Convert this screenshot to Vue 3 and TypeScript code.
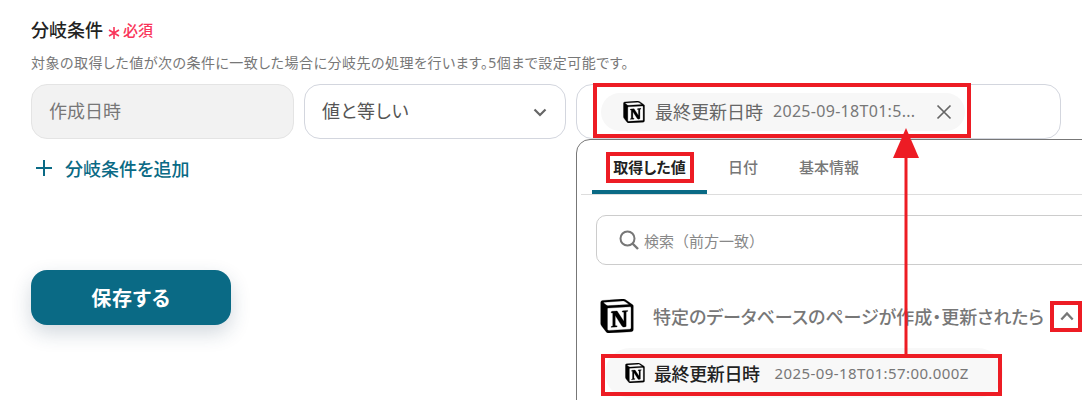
<script setup lang="ts">
const notionPath =
  'M4.459 4.208c.746.606 1.026.56 2.428.466l13.215-.793c.28 0 .047-.28-.046-.326L17.86 1.968c-.42-.326-.981-.7-2.055-.607L3.01 2.295c-.466.046-.56.28-.374.466zm.793 3.08v13.904c0 .747.373 1.027 1.214.98l14.523-.84c.841-.046.935-.56.935-1.167V6.354c0-.606-.233-.933-.748-.887l-15.177.887c-.56.047-.747.327-.747.933zm14.337.745c.093.42 0 .84-.42.888l-.7.14v10.264c-.608.327-1.168.514-1.635.514-.748 0-.935-.234-1.495-.933l-4.577-7.186v6.952L12.21 19s0 .84-1.168.84l-3.222.186c-.093-.186 0-.653.327-.746l.84-.233V9.854L7.822 9.76c-.094-.42.14-1.026.793-1.073l3.456-.233 4.764 7.279v-6.44l-1.215-.139c-.093-.514.28-.887.747-.933zM1.936 1.035l13.31-.98c1.634-.14 2.055-.047 3.082.7l4.249 2.986c.7.513.934.653.934 1.213v16.378c0 1.026-.373 1.634-1.68 1.726l-15.458.934c-.98.047-1.448-.093-1.962-.747l-3.129-4.06c-.56-.747-.793-1.306-.793-1.96V2.667c0-.839.374-1.54 1.447-1.632z'

const tabs = ['取得した値', '日付', '基本情報']
</script>

<template>
  <div class="page">
    <div class="title-row">
      <span class="title">分岐条件</span>
      <svg class="asterisk" width="12" height="12" viewBox="0 0 12 12" fill="none">
        <path d="M6 0v12M1 3l10 6M11 3 1 9" stroke="#f9355a" stroke-width="1.6" />
      </svg>
      <span class="required">必須</span>
    </div>
    <p class="desc">対象の取得した値が次の条件に一致した場合に分岐先の処理を行います。5個まで設定可能です。</p>

    <div class="fields">
      <div class="field disabled"><span class="label">作成日時</span></div>
      <div class="field select">
        <span class="label wide">値と等しい</span>
        <svg width="16" height="16" viewBox="0 0 16 16" fill="none">
          <path d="M2.5 5.5 8 11l5.5-5.5" stroke="#666" stroke-width="2.2" />
        </svg>
      </div>
      <div class="field value">
        <div class="chip">
          <svg class="logo" width="22" height="22" viewBox="0 0 24 24">
            <path d="M2 2 18 1l5 4v18L6 24l-5-5z" fill="#fff" />
            <path :d="notionPath" fill="#000" stroke="#000" stroke-width=".3" />
          </svg>
          <span class="chip-name">最終更新日時</span>
          <span class="chip-date">2025-09-18T01:5...</span>
          <svg class="close" width="16" height="16" viewBox="0 0 16 16" fill="none">
            <path d="M1.5 1.5l13 13M14.5 1.5l-13 13" stroke="#666" stroke-width="1.7" />
          </svg>
        </div>

        <div class="popup">
          <div class="tabs">
            <div v-for="(tab, i) in tabs" :key="tab" class="tab" :class="{ active: i === 0 }">{{ tab }}</div>
          </div>
          <div class="search">
            <svg width="22" height="22" viewBox="0 0 22 22" fill="none">
              <circle cx="9.5" cy="9.5" r="7" stroke="#777" stroke-width="2" />
              <path d="M14.5 14.5 20 20" stroke="#777" stroke-width="2.4" />
            </svg>
            <span>検索（前方一致）</span>
          </div>
          <div class="group">
            <svg width="34" height="34" viewBox="0 0 24 24">
              <path d="M2 2 18 1l5 4v18L6 24l-5-5z" fill="#fff" />
              <path :d="notionPath" fill="#000" stroke="#000" stroke-width=".2" />
            </svg>
            <span class="group-name">特定のデータベースのページが作成・更新されたら</span>
            <svg class="chevron" width="14" height="14" viewBox="0 0 16 16" fill="none">
              <path d="M1.5 12 8 5l6.5 7" stroke="#777" stroke-width="2.6" />
            </svg>
          </div>
          <div class="item">
            <svg width="20" height="20" viewBox="0 0 24 24">
              <path d="M2 2 18 1l5 4v18L6 24l-5-5z" fill="#fff" />
              <path :d="notionPath" fill="#000" stroke="#000" stroke-width=".3" />
            </svg>
            <span class="item-name">最終更新日時</span>
            <span class="item-date">2025-09-18T01:57:00.000Z</span>
          </div>
        </div>
      </div>
    </div>

    <div class="add">
      <svg width="16" height="16" viewBox="0 0 16 16" fill="none">
        <path d="M8 0v16M0 8h16" stroke="#0a6a85" stroke-width="2" />
      </svg>
      <span>分岐条件を追加</span>
    </div>

    <button class="save" type="button">保存する</button>

    <!-- red annotations drawn over the capture -->
    <div class="mark mark-chip"></div>
    <div class="mark mark-tab"></div>
    <div class="mark mark-chevron"></div>
    <div class="mark mark-item"></div>
    <svg class="arrow" width="30" height="230" viewBox="0 0 30 230">
      <path d="M15 28V227" stroke="#ed1c24" stroke-width="3" />
      <path d="M15 0 28 30H2z" fill="#ed1c24" />
    </svg>
  </div>
</template>

<style>
html,
body {
  margin: 0;
  background: #fff;
}
</style>

<style scoped>
.page {
  position: relative;
  width: 1082px;
  height: 400px;
  overflow: hidden;
  box-sizing: border-box;
  padding: 17px 21px 0 31px;
  font-family: "Noto Sans", "Noto Sans CJK JP", sans-serif;
  font-feature-settings: "palt";
  color: #222;
}
.title-row {
  display: flex;
  align-items: center;
  height: 24px;
}
.title {
  font-size: 18px;
  font-weight: 500;
}
.asterisk {
  margin: 8px 0 0 5px;
}
.required {
  margin-left: 3px;
  padding-top: 1px;
  color: #f9355a;
  font-size: 15px;
  font-weight: 500;
}
.desc {
  margin: 10px 0 0;
  font-size: 14px;
  line-height: 24px;
  letter-spacing: 0.5px;
  color: #777;
}
.fields {
  display: flex;
  gap: 10px;
  margin-top: 9px;
}
.field {
  box-sizing: border-box;
  height: 55px;
  border: 1px solid #d3d6de;
  border-radius: 16px;
  display: flex;
  align-items: center;
  padding: 0 17px;
  font-size: 18px;
  color: #555;
}
.label {
  padding-bottom: 3px;
}
.wide {
  letter-spacing: 0.6px;
}
.disabled {
  width: 263px;
  background: #f2f2f2;
  border-color: #e4e4e4;
  color: #777;
}
.select {
  width: 262px;
  justify-content: space-between;
}
.value {
  position: relative;
  width: 485px;
  padding: 0 0 0 24px;
}
.chip {
  box-sizing: border-box;
  width: 364px;
  height: 38px;
  border-radius: 19px;
  background: #f7f7f7;
  display: flex;
  align-items: center;
  padding-left: 22px;
}
.chip-name {
  margin-left: 10px;
  padding-bottom: 2px;
  font-size: 18px;
  color: #666;
}
.chip-date {
  margin-left: 10px;
  padding-bottom: 1px;
  font-size: 16px;
  letter-spacing: 0.3px;
  color: #777;
  white-space: nowrap;
}
.close {
  margin-left: auto;
  margin-right: 13px;
}
.popup {
  position: absolute;
  left: -1px;
  top: 54px;
  width: 560px;
  height: 300px;
  background: #fff;
  border: 1px solid #777;
  border-radius: 14px;
  padding: 0 4px;
}
.tabs {
  display: flex;
  height: 54px;
  border-bottom: 1px solid #ddd;
}
.tab {
  box-sizing: border-box;
  height: 54px;
  padding-top: 15px;
  font-size: 15px;
  line-height: 24px;
  font-weight: 500;
  color: #777;
  margin-left: 41px;
}
.tab.active {
  width: 115px;
  margin-left: 11px;
  text-align: center;
  color: #222;
  font-weight: 700;
  border-bottom: 4px solid #0a6a85;
  border-radius: 4px 4px 0 0;
}
.tab.active + .tab {
  margin-left: 21px;
}
.search {
  margin: 20px 0 0 15px;
  box-sizing: border-box;
  height: 50px;
  border: 1px solid #ccc;
  border-radius: 10px;
  display: flex;
  align-items: center;
  gap: 4px;
  padding-left: 21px;
  font-size: 15px;
  font-feature-settings: normal;
  color: #888;
}
.group {
  display: flex;
  align-items: center;
  margin: 33px 0 0 19px;
  height: 36px;
}
.group-name {
  margin-left: 19px;
  font-size: 18px;
  font-weight: 500;
  color: #777;
  white-space: nowrap;
}
.chevron {
  margin-left: 16px;
}
.item {
  display: flex;
  align-items: center;
  margin: 14px 0 0 24px;
  width: 398px;
  height: 50px;
  border-radius: 25px;
  box-sizing: border-box;
  background: #f8f8f8;
  padding-left: 20px;
}
.item-name {
  margin-left: 9px;
  padding-bottom: 1px;
  font-size: 18px;
  font-weight: 500;
  letter-spacing: -0.4px;
  color: #222;
}
.item-date {
  margin-left: 15px;
  font-size: 15px;
  letter-spacing: 0.4px;
  color: #777;
}
.add {
  display: flex;
  align-items: center;
  gap: 13px;
  margin: 16px 0 0 5px;
  height: 26px;
  font-size: 18px;
  font-weight: 500;
  color: #0a6a85;
}
.save {
  display: block;
  margin-top: 89px;
  width: 200px;
  height: 55px;
  border: 0;
  border-radius: 16px;
  background: #0a6a85;
  color: #fff;
  font-family: inherit;
  font-feature-settings: inherit;
  font-size: 20px;
  font-weight: 700;
  letter-spacing: 0.8px;
  box-shadow: 0 8px 20px rgba(30, 60, 90, 0.2);
}
.mark {
  position: absolute;
  box-sizing: border-box;
  border: 4px solid #ed1c24;
}
.mark-chip {
  left: 593px;
  top: 83px;
  width: 378px;
  height: 55px;
}
.mark-tab {
  left: 606px;
  top: 152px;
  width: 88px;
  height: 31px;
}
.mark-chevron {
  left: 1050px;
  top: 301px;
  width: 32px;
  height: 31px;
}
.mark-item {
  left: 601px;
  top: 354px;
  width: 401px;
  height: 42px;
}
.arrow {
  position: absolute;
  left: 891px;
  top: 128px;
}
</style>
